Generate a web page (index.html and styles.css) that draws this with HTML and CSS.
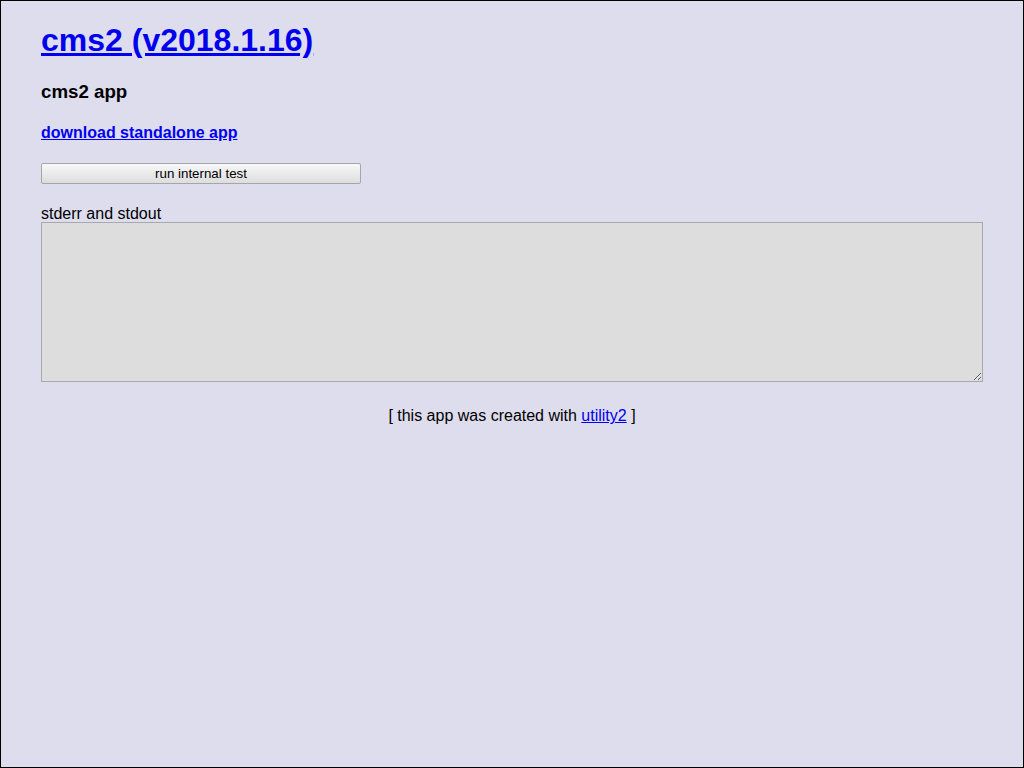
FILE: index.html
```html
<!DOCTYPE html>
<html>
<head>
<meta charset="utf-8">
<title>cms2 (v2018.1.16)</title>
<link rel="stylesheet" href="styles.css">
</head>
<body>
<h1><a href="#">cms2 (v2018.1.16)</a></h1>
<h3 class="desc">cms2 app</h3>
<h4><a href="#">download standalone app</a></h4>
<button class="testBtn">run internal test</button>
<div class="outputBlock">
<label class="outputLabel">stderr and stdout</label>
<textarea class="outputArea" readonly></textarea>
</div>
<div class="footer">[ this app was created with <a href="#">utility2</a> ]</div>
</body>
</html>
```

FILE: styles.css
```css
html {
  margin: 0;
  border: 1px solid #000;
  height: 766px;
  background: #dde;
  overflow: hidden;
}
body {
  margin: 0 40px;
  background: #dde;
  font-family: "Liberation Sans", Arial, Helvetica, sans-serif;
  color: #000;
}
a {
  color: #0000ee;
}
h1 {
  font-size: 32px;
  margin: 21.44px 0;
}
h3 {
  font-size: 18.72px;
  margin: 18.72px 0;
}
h4 {
  font-size: 16px;
  margin: 21.28px 0;
}
.testBtn {
  display: block;
  width: 320px;
  height: 21px;
  margin: 0 0 20px 0;
  padding: 0;
  font-family: "Liberation Sans", Arial, sans-serif;
  font-size: 13.33px;
  color: #000;
  background: linear-gradient(#f8f8f8, #dddddd);
  border: 1px solid #a6a6a6;
  border-radius: 2px;
  box-sizing: border-box;
}
.outputBlock {
  font-size: 16px;
  line-height: 18px;
}
.outputLabel {
  display: block;
  padding-top: 1px;
  margin-bottom: -1px;
}
.outputArea {
  display: block;
  box-sizing: border-box;
  width: 100%;
  height: 160px;
  margin: 0;
  background: #ddd;
  border: 1px solid #a9a9a9;
  font-family: "Liberation Mono", monospace;
}
.footer {
  margin-top: 25px;
  text-align: center;
  font-size: 16px;
}
```
